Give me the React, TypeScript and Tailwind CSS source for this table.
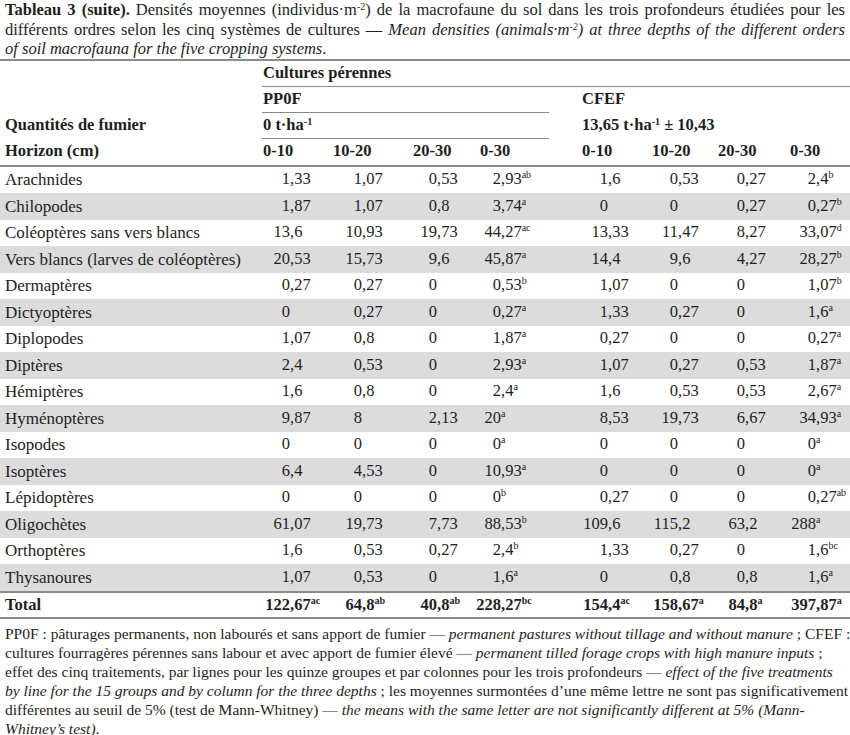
const rows: string[][] = [
  ["Arachnides", "1,33", "1,07", "0,53", "2,93^ab", "1,6", "0,53", "0,27", "2,4^b"],
  ["Chilopodes", "1,87", "1,07", "0,8", "3,74^a", "0", "0", "0,27", "0,27^b"],
  ["Coléoptères sans vers blancs", "13,6", "10,93", "19,73", "44,27^ac", "13,33", "11,47", "8,27", "33,07^d"],
  ["Vers blancs (larves de coléoptères)", "20,53", "15,73", "9,6", "45,87^a", "14,4", "9,6", "4,27", "28,27^b"],
  ["Dermaptères", "0,27", "0,27", "0", "0,53^b", "1,07", "0", "0", "1,07^b"],
  ["Dictyoptères", "0", "0,27", "0", "0,27^a", "1,33", "0,27", "0", "1,6^a"],
  ["Diplopodes", "1,07", "0,8", "0", "1,87^a", "0,27", "0", "0", "0,27^a"],
  ["Diptères", "2,4", "0,53", "0", "2,93^a", "1,07", "0,27", "0,53", "1,87^a"],
  ["Hémiptères", "1,6", "0,8", "0", "2,4^a", "1,6", "0,53", "0,53", "2,67^a"],
  ["Hyménoptères", "9,87", "8", "2,13", "20^a", "8,53", "19,73", "6,67", "34,93^a"],
  ["Isopodes", "0", "0", "0", "0^a", "0", "0", "0", "0^a"],
  ["Isoptères", "6,4", "4,53", "0", "10,93^a", "0", "0", "0", "0^a"],
  ["Lépidoptères", "0", "0", "0", "0^b", "0,27", "0", "0", "0,27^ab"],
  ["Oligochètes", "61,07", "19,73", "7,73", "88,53^b", "109,6", "115,2", "63,2", "288^a"],
  ["Orthoptères", "1,6", "0,53", "0,27", "2,4^b", "1,33", "0,27", "0", "1,6^bc"],
  ["Thysanoures", "1,07", "0,53", "0", "1,6^a", "0", "0,8", "0,8", "1,6^a"],
];

const total = ["122,67^ac", "64,8^ab", "40,8^ab", "228,27^bc", "154,4^ac", "158,67^a", "84,8^a", "397,87^a"];

const depths = ["0-10", "10-20", "20-30", "0-30", "0-10", "10-20", "20-30", "0-30"];

// integer part box per column, so the numbers line up on the comma
const intW = ["w-[32px]", "w-[34px]", "w-[29px]", "w-[26px]", "w-[31px]", "w-[31px]", "w-[32px]", "w-[31px]"];

const grid = "grid grid-cols-[258px_70px_80px_67px_102px_70px_66px_72px_65px]";

const Num = ({ v, col }: { v: string; col: number }) => {
  const [num, sup] = v.split("^");
  const [int, frac] = num.split(",");
  return (
    <div className="flex items-baseline whitespace-nowrap">
      <span className={`${intW[col]} shrink-0 text-right`}>{int}</span>
      <span>{frac !== undefined ? "," + frac : ""}</span>
      {sup && <sup className="text-[10px] -top-[6px]">{sup}</sup>}
    </div>
  );
};

export default function App() {
  return (
    <div className="w-[850px] bg-white text-[#1e1e1e] font-['Liberation_Serif',serif] text-[16.5px]">
      <div className="pl-[5px] pr-[5px] leading-[19.5px]">
        <div className="whitespace-nowrap text-justify [text-align-last:justify]">
          <b>Tableau 3 (suite).</b> Densités moyennes (individus·m<sup className="text-[10px]">-2</sup>) de la macrofaune du sol dans les trois profondeurs étudiées pour les
        </div>
        <div className="whitespace-nowrap text-justify [text-align-last:justify]">
          différents ordres selon les cinq systèmes de cultures — <i>Mean densities (animals·m<sup className="text-[10px]">-2</sup>) at three depths of the different orders</i>
        </div>
        <div className="whitespace-nowrap">
          <i>of soil macrofauna for the five cropping systems</i>.
        </div>
      </div>

      <div className="border-t-2 border-b-2 border-[#8a8a8a]">
        <div className="flex h-[26px] font-bold">
          <div className="w-[258px]" />
          <div className="ml-[4px] flex-1 border-b border-[#8a8a8a] pl-[1px] flex items-center">Cultures pérennes</div>
        </div>
        <div className="flex h-[26px] font-bold">
          <div className="w-[258px]" />
          <div className="w-[319px]">
            <div className="ml-[4px] w-[287px] h-full border-b border-[#8a8a8a] pl-[1px] flex items-center">PP0F</div>
          </div>
          <div className="flex-1 pl-[5px] flex items-center">CFEF</div>
        </div>
        <div className="flex h-[26px] font-bold">
          <div className="w-[258px] pl-[5px] flex items-center">Quantités de fumier</div>
          <div className="w-[319px]">
            <div className="ml-[4px] w-[287px] h-full border-b border-[#8a8a8a] pl-[1px] flex items-center">
              <span>
                0 t·ha<sup className="text-[10px]">-1</sup>
              </span>
            </div>
          </div>
          <div className="flex-1 pl-[5px] flex items-center">
            <span>
              13,65 t·ha<sup className="text-[10px]">-1</sup> ± 10,43
            </span>
          </div>
        </div>
        <div className={`${grid} h-[26px] items-center font-bold`}>
          <div className="pl-[5px]">Horizon (cm)</div>
          {depths.map((d, i) => (
            <div key={i} className="pl-[5px]">
              {d}
            </div>
          ))}
        </div>
      </div>

      <div className="border-b-2 border-[#8a8a8a]">
        {rows.map((r, ri) => (
          <div key={ri} className={`${grid} h-[26.5px] items-center ${ri % 2 === 1 ? "bg-[#dcdcdc]" : ""}`}>
            <div className="pl-[5px] whitespace-nowrap text-[17px]">{r[0]}</div>
            {r.slice(1).map((v, ci) => (
              <Num key={ci} v={v} col={ci} />
            ))}
          </div>
        ))}
      </div>

      <div className={`${grid} h-[26px] items-center font-bold border-b-2 border-[#8a8a8a]`}>
        <div className="pl-[5px]">Total</div>
        {total.map((v, ci) => (
          <Num key={ci} v={v} col={ci} />
        ))}
      </div>

      <div className="pl-[5px] pr-[5px] pt-[5px] text-[15.5px] leading-[19px]">
        <div className="whitespace-nowrap text-justify [text-align-last:justify]">
          PP0F : pâturages permanents, non labourés et sans apport de fumier — <i>permanent pastures without tillage and without manure</i> ; CFEF :
        </div>
        <div className="whitespace-nowrap">
          cultures fourragères pérennes sans labour et avec apport de fumier élevé — <i>permanent tilled forage crops with high manure inputs</i> ;
        </div>
        <div className="whitespace-nowrap">
          effet des cinq traitements, par lignes pour les quinze groupes et par colonnes pour les trois profondeurs — <i>effect of the five treatments</i>
        </div>
        <div className="whitespace-nowrap text-justify [text-align-last:justify]">
          <i>by line for the 15 groups and by column for the three depths</i> ; les moyennes surmontées d’une même lettre ne sont pas significativement
        </div>
        <div className="whitespace-nowrap">
          différentes au seuil de 5% (test de Mann-Whitney) — <i>the means with the same letter are not significantly different at 5% (Mann-</i>
        </div>
        <div className="whitespace-nowrap">
          <i>Whitney’s test)</i>.
        </div>
      </div>
    </div>
  );
}
